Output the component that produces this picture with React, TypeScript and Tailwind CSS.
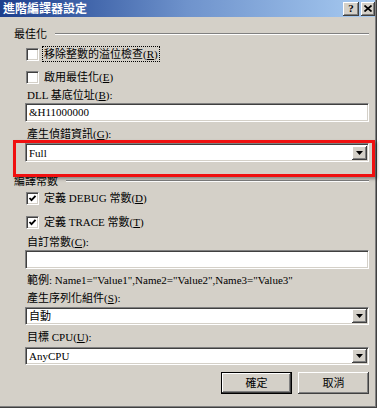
import React from 'react';

const FONT = { fontFamily: '"Liberation Serif", "Noto Sans CJK TC", serif' };

const sunken =
  'bg-white border border-t-[#808080] border-l-[#808080] border-r-white border-b-white shadow-[inset_1px_1px_0_#404040,inset_-1px_-1px_0_#d4d0c8]';
const raised =
  'bg-[#d4d0c8] shadow-[inset_-1px_-1px_0_#404040,inset_1px_1px_0_#ffffff,inset_-2px_-2px_0_#808080,inset_2px_2px_0_#d4d0c8]';

const U: React.FC<{ c: string }> = ({ c }) => <span className="underline underline-offset-1">{c}</span>;

const Header: React.FC<{ label: string }> = ({ label }) => (
  <div className="flex items-center h-[14px] leading-[14px] pl-[14px] pr-[8px]">
    <span>{label}</span>
    <div className="flex-1 ml-[8px] h-[2px] border-t border-t-[#808080] border-b border-b-white" />
  </div>
);

const Check: React.FC<{ checked?: boolean; focus?: boolean; children: React.ReactNode; className?: string }> = ({
  checked,
  focus,
  children,
  className,
}) => (
  <div className={`flex items-center h-[14px] leading-[14px] pl-[26px] ${className ?? ''}`}>
    <div className={`w-[13px] h-[13px] flex items-center justify-center ${sunken}`}>
      {checked && (
        <svg width="9" height="9" viewBox="0 0 9 9">
          <polyline points="1.5,4 3.5,6.2 7.5,1.8" fill="none" stroke="#000" strokeWidth="1.8" />
        </svg>
      )}
    </div>
    <span className={`ml-[4px] px-[1px] ${focus ? 'outline outline-1 outline-dotted outline-black' : 'outline-none'}`}>
      {children}
    </span>
  </div>
);

const Label: React.FC<{ children: React.ReactNode; className?: string }> = ({ children, className }) => (
  <div className={`h-[14px] leading-[14px] pl-[27px] ${className ?? ''}`}>{children}</div>
);

const TextBox: React.FC<{ value?: string; className?: string }> = ({ value, className }) => (
  <div className={`ml-[25px] mr-[8px] h-[19px] leading-[17px] pl-[3px] ${sunken} ${className ?? ''}`}>{value}</div>
);

const Combo: React.FC<{ value: string; className?: string }> = ({ value, className }) => (
  <div className={`ml-[25px] mr-[8px] h-[18px] flex items-center justify-between pl-[3px] pr-[1px] ${sunken} ${className ?? ''}`}>
    <span className="leading-[16px]">{value}</span>
    <div className={`w-[15px] h-[14px] flex items-center justify-center ${raised}`}>
      <svg width="7" height="4" viewBox="0 0 7 4">
        <polygon points="0,0 7,0 3.5,4" fill="#000" />
      </svg>
    </div>
  </div>
);

export default function App() {
  return (
    <div className="w-[380px] h-[410px] bg-white text-[11px] text-black" style={FONT}>
      <div className="relative w-[377px] h-[408px] bg-[#d4d0c8] flex flex-col shadow-[inset_-1px_-1px_0_#404040,inset_-2px_-2px_0_#808080]">
        {/* title bar */}
        <div className="h-[17px] mr-[2px] flex items-center justify-between bg-linear-to-r from-[#1c3d8c] via-[#6f93cc] to-[#a8cbf1]">
          <span className="pl-[3px] text-white font-bold text-[12px] leading-[16px]">進階編譯器設定</span>
          <div className="flex gap-[2px] pr-[0px]">
            <div className={`w-[16px] h-[14px] flex items-center justify-center font-bold text-[11px] leading-none ${raised}`}>?</div>
            <div className={`w-[14px] h-[14px] flex items-center justify-center ${raised}`}>
              <svg width="8" height="7" viewBox="0 0 8 7">
                <path d="M0.5 0.5 L7.5 6.5 M7.5 0.5 L0.5 6.5" stroke="#000" strokeWidth="1.7" />
              </svg>
            </div>
          </div>
        </div>

        <div className="mt-[10px]">
          <Header label="最佳化" />
        </div>
        <Check focus className="mt-[6px]">
          移除整數的溢位檢查(<U c="R" />)
        </Check>
        <Check className="mt-[9px]">
          啟用最佳化(<U c="E" />)
        </Check>
        <Label className="mt-[4px]">
          DLL 基底位址(<U c="B" />):
        </Label>
        <TextBox value="&H11000000" className="mt-[1px]" />
        <Label className="mt-[5px]">
          產生偵錯資訊(<U c="G" />):
        </Label>
        <Combo value="Full" className="mt-[2px] h-[19px]" />

        <div className="mt-[12px]">
          <Header label="編譯常數" />
        </div>
        <Check checked className="mt-[3px]">
          定義 DEBUG 常數(<U c="D" />)
        </Check>
        <Check checked className="mt-[10px]">
          定義 TRACE 常數(<U c="T" />)
        </Check>
        <Label className="mt-[6px]">
          自訂常數(<U c="C" />):
        </Label>
        <TextBox className="mt-[1px]" />
        <Label className="mt-[4px]">範例: Name1="Value1",Name2="Value2",Name3="Value3"</Label>
        <Label className="mt-[4px]">
          產生序列化組件(<U c="S" />):
        </Label>
        <Combo value="自動" className="mt-[2px]" />
        <Label className="mt-[5px]">
          目標 CPU(<U c="U" />):
        </Label>
        <Combo value="AnyCPU" className="mt-[3px]" />

        <div className="mt-[7px] flex justify-end gap-[6px] pr-[8px]">
          <div className="w-[71px] h-[22px] border border-black">
            <div className={`w-full h-full flex items-center justify-center ${raised}`}>確定</div>
          </div>
          <div className={`w-[71px] h-[22px] flex items-center justify-center ${raised}`}>取消</div>
        </div>

        {/* red highlight box */}
        <div className="absolute left-[13px] top-[140px] w-[362px] h-[37px] border-[3px] border-[#f01010] shadow-[2px_2px_3px_rgba(0,0,0,0.35)]" />
      </div>
    </div>
  );
}
